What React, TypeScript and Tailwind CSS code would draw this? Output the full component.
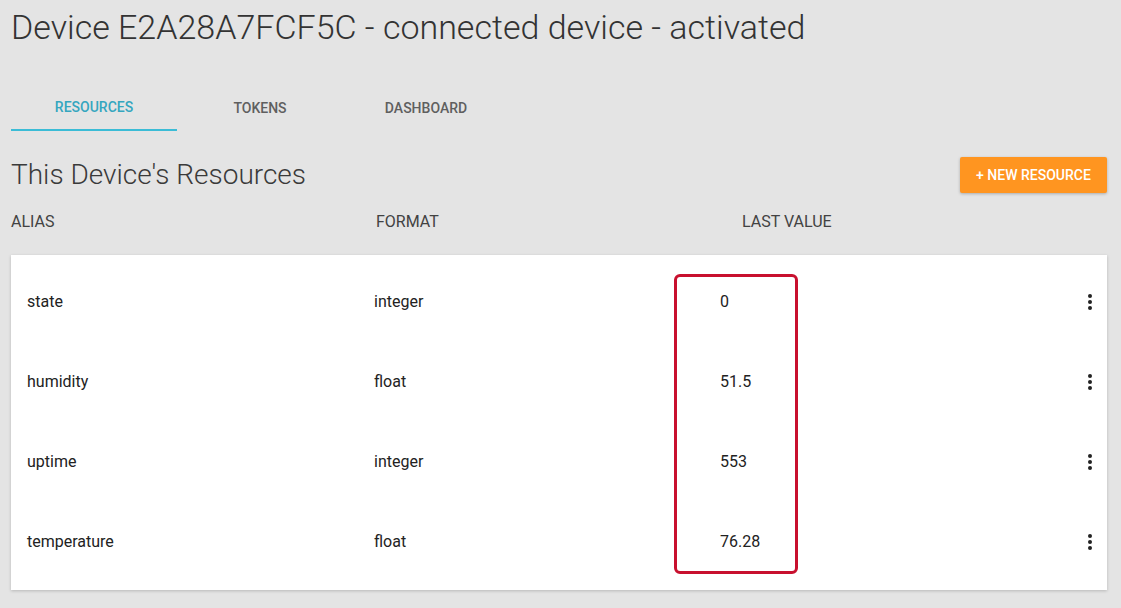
const rows = [
  { alias: "state", format: "integer", value: "0" },
  { alias: "humidity", format: "float", value: "51.5" },
  { alias: "uptime", format: "integer", value: "553" },
  { alias: "temperature", format: "float", value: "76.28" },
];

const tabs = ["Resources", "Tokens", "Dashboard"];

function Kebab() {
  return (
    <svg width="6" height="18" viewBox="0 0 6 18" fill="#222">
      <circle cx="3" cy="3" r="2" />
      <circle cx="3" cy="9" r="2" />
      <circle cx="3" cy="15" r="2" />
    </svg>
  );
}

export default function App() {
  return (
    <div className="min-h-[608px] w-[1121px] bg-[#e4e4e4] px-[11px] pt-[7px] font-['Roboto',sans-serif]">
      <h1 className="text-[34px] leading-[40px] font-light text-[#333]">
        Device E2A28A7FCF5C - connected device - activated
      </h1>

      <div className="mt-[36px] flex">
        {tabs.map((tab, i) => (
          <div
            key={tab}
            className={
              i === 0
                ? "flex h-[48px] w-[166px] items-center justify-center border-b-2 border-[#3bbcd6] pt-[2px] text-[14px] font-medium uppercase text-[#35a6bf]"
                : "flex h-[48px] w-[166px] items-center justify-center pt-[2px] text-[14px] font-medium uppercase text-[#5f5f5f]"
            }
          >
            {tab}
          </div>
        ))}
      </div>

      <div className="mt-[26px] flex w-[1096px] items-center justify-between">
        <h2 className="text-[28px] leading-[36px] font-light text-[#3a3a3a]">This Device's Resources</h2>
        <button className="h-[36px] w-[147px] rounded-[2px] bg-[#ff9520] text-[14px] font-medium uppercase text-white shadow-[0_1px_3px_rgba(0,0,0,0.25)]">
          + New Resource
        </button>
      </div>

      <div className="mt-[19px] flex text-[16px] leading-[20px] uppercase text-[#424242]">
        <div className="w-[365px]">Alias</div>
        <div className="w-[366px]">Format</div>
        <div>Last Value</div>
      </div>

      <div className="relative mt-[23px] w-[1096px] bg-white pt-[7px] pb-[8px] shadow-[0_1px_3px_rgba(0,0,0,0.2)]">
        {rows.map(row => (
          <div key={row.alias} className="flex h-[80px] items-center pl-[16px] text-[16px] text-[#222]">
            <div className="w-[347px]">{row.alias}</div>
            <div className="w-[346px]">{row.format}</div>
            <div className="flex-1">{row.value}</div>
            <div className="flex w-[20px] justify-start">
              <Kebab />
            </div>
          </div>
        ))}
        <div className="absolute left-[663px] top-[19px] h-[300px] w-[124px] rounded-[6px] border-[3px] border-[#c8102e]" />
      </div>
    </div>
  );
}
